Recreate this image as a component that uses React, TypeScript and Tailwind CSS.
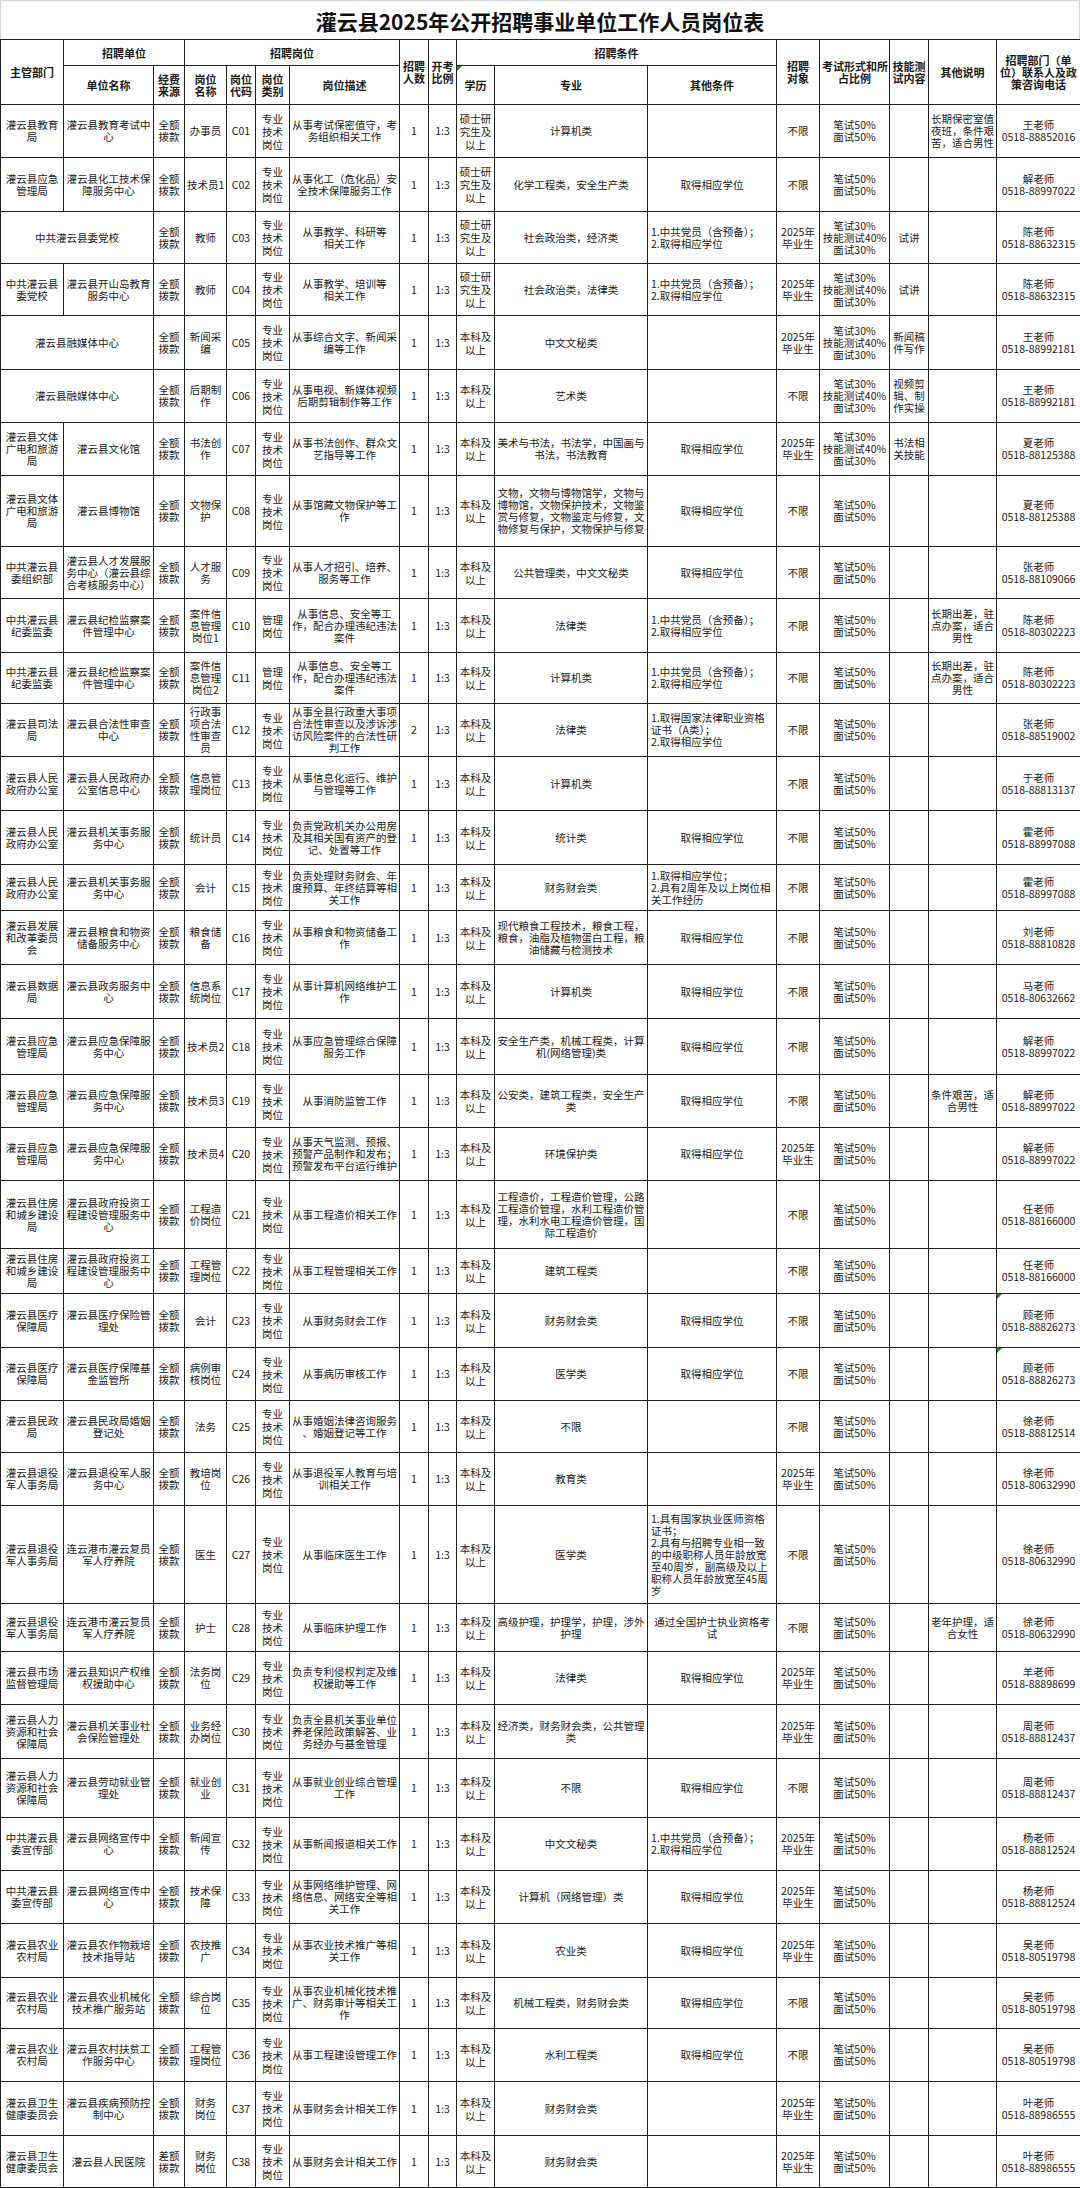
import React from "react";

type R = {
  h: string;
  dept: string;
  unit: string;
  merged?: boolean;
  fund: string;
  name: string;
  code: string;
  cat: string;
  desc: string;
  num: string;
  edu: string;
  major: string;
  other: string;
  otherLeft?: boolean;
  target: string;
  exam: string;
  skill: string;
  note: string;
  contact: string;
  mark?: boolean;
};

const E2 = "2025年\n毕业生";
const X55 = "笔试50%\n面试50%";
const X343 = "笔试30%\n技能测试40%\n面试30%";
const ZY = "专业\n技术\n岗位";
const GL = "管理\n岗位";
const BK = "本科及\n以上";
const SS = "硕士研\n究生及\n以上";
const DEG = "取得相应学位";
const DY = "1.中共党员（含预备）；\n2.取得相应学位";
const QE = "全额\n拨款";

function mk(p: Partial<R> & { h: string; dept: string; unit: string; name: string; code: string; desc: string; contact: string }): R {
  return {
    fund: QE,
    cat: ZY,
    num: "1",
    edu: BK,
    major: "",
    other: "",
    target: "不限",
    exam: X55,
    skill: "",
    note: "",
    ...p,
  } as R;
}

const rows: R[] = [
  mk({ h: "h-[53px]", dept: "灌云县教育\n局", unit: "灌云县教育考试中\n心", name: "办事员", code: "C01", desc: "从事考试保密值守，考\n务组织相关工作", edu: SS, major: "计算机类", note: "长期保密室值\n夜班，条件艰\n苦，适合男性", contact: "王老师\n0518-88852016" }),
  mk({ h: "h-[54px]", dept: "灌云县应急\n管理局", unit: "灌云县化工技术保\n障服务中心", name: "技术员1", code: "C02", desc: "从事化工（危化品）安\n全技术保障服务工作", edu: SS, major: "化学工程类，安全生产类", other: DEG, contact: "解老师\n0518-88997022" }),
  mk({ h: "h-[52px]", dept: "", unit: "中共灌云县委党校", merged: true, name: "教师", code: "C03", desc: "从事教学、科研等\n相关工作", edu: SS, major: "社会政治类，经济类", other: DY, otherLeft: true, target: E2, exam: X343, skill: "试讲", contact: "陈老师\n0518-88632315" }),
  mk({ h: "h-[52px]", dept: "中共灌云县\n委党校", unit: "灌云县开山岛教育\n服务中心", name: "教师", code: "C04", desc: "从事教学、培训等\n相关工作", edu: SS, major: "社会政治类，法律类", other: DY, otherLeft: true, target: E2, exam: X343, skill: "试讲", contact: "陈老师\n0518-88632315" }),
  mk({ h: "h-[54px]", dept: "", unit: "灌云县融媒体中心", merged: true, name: "新闻采\n编", code: "C05", desc: "从事综合文字、新闻采\n编等工作", major: "中文文秘类", target: E2, exam: X343, skill: "新闻稿\n件写作", contact: "王老师\n0518-88992181" }),
  mk({ h: "h-[53px]", dept: "", unit: "灌云县融媒体中心", merged: true, name: "后期制\n作", code: "C06", desc: "从事电视、新媒体视频\n后期剪辑制作等工作", major: "艺术类", exam: X343, skill: "视频剪\n辑、制\n作实操", contact: "王老师\n0518-88992181" }),
  mk({ h: "h-[53px]", dept: "灌云县文体\n广电和旅游\n局", unit: "灌云县文化馆", name: "书法创\n作", code: "C07", desc: "从事书法创作、群众文\n艺指导等工作", major: "美术与书法，书法学，中国画与\n书法，书法教育", other: DEG, target: E2, exam: X343, skill: "书法相\n关技能", contact: "夏老师\n0518-88125388" }),
  mk({ h: "h-[71px]", dept: "灌云县文体\n广电和旅游\n局", unit: "灌云县博物馆", name: "文物保\n护", code: "C08", desc: "从事馆藏文物保护等工\n作", major: "文物，文物与博物馆学，文物与\n博物馆，文物保护技术，文物鉴\n赏与修复，文物鉴定与修复，文\n物修复与保护，文物保护与修复", other: DEG, contact: "夏老师\n0518-88125388" }),
  mk({ h: "h-[52px]", dept: "中共灌云县\n委组织部", unit: "灌云县人才发展服\n务中心（灌云县综\n合考核服务中心）", name: "人才服\n务", code: "C09", desc: "从事人才招引、培养、\n服务等工作", major: "公共管理类，中文文秘类", other: DEG, contact: "张老师\n0518-88109066" }),
  mk({ h: "h-[54px]", dept: "中共灌云县\n纪委监委", unit: "灌云县纪检监察案\n件管理中心", name: "案件信\n息管理\n岗位1", code: "C10", cat: GL, desc: "从事信息、安全等工\n作，配合办理违纪违法\n案件", major: "法律类", other: DY, otherLeft: true, note: "长期出差，驻\n点办案，适合\n男性", contact: "陈老师\n0518-80302223" }),
  mk({ h: "h-[51px]", dept: "中共灌云县\n纪委监委", unit: "灌云县纪检监察案\n件管理中心", name: "案件信\n息管理\n岗位2", code: "C11", cat: GL, desc: "从事信息、安全等工\n作，配合办理违纪违法\n案件", major: "计算机类", other: DY, otherLeft: true, note: "长期出差，驻\n点办案，适合\n男性", contact: "陈老师\n0518-80302223" }),
  mk({ h: "h-[53px]", dept: "灌云县司法\n局", unit: "灌云县合法性审查\n中心", name: "行政事\n项合法\n性审查\n员", code: "C12", desc: "从事全县行政重大事项\n合法性审查以及涉诉涉\n访风险案件的合法性研\n判工作", num: "2", major: "法律类", other: "1.取得国家法律职业资格\n证书（A类）；\n2.取得相应学位", otherLeft: true, contact: "张老师\n0518-88519002" }),
  mk({ h: "h-[54px]", dept: "灌云县人民\n政府办公室", unit: "灌云县人民政府办\n公室信息中心", name: "信息管\n理岗位", code: "C13", desc: "从事信息化运行、维护\n与管理等工作", major: "计算机类", contact: "于老师\n0518-88813137" }),
  mk({ h: "h-[54px]", dept: "灌云县人民\n政府办公室", unit: "灌云县机关事务服\n务中心", name: "统计员", code: "C14", desc: "负责党政机关办公用房\n及其相关国有资产的登\n记、处置等工作", major: "统计类", other: DEG, contact: "霍老师\n0518-88997088" }),
  mk({ h: "h-[46px]", dept: "灌云县人民\n政府办公室", unit: "灌云县机关事务服\n务中心", name: "会计", code: "C15", desc: "负责处理财务财会、年\n度预算、年终结算等相\n关工作", major: "财务财会类", other: "1.取得相应学位；\n2.具有2周年及以上岗位相\n关工作经历", otherLeft: true, contact: "霍老师\n0518-88997088" }),
  mk({ h: "h-[54px]", dept: "灌云县发展\n和改革委员\n会", unit: "灌云县粮食和物资\n储备服务中心", name: "粮食储\n备", code: "C16", desc: "从事粮食和物资储备工\n作", major: "现代粮食工程技术，粮食工程，\n粮食，油脂及植物蛋白工程，粮\n油储藏与检测技术", other: DEG, contact: "刘老师\n0518-88810828" }),
  mk({ h: "h-[54px]", dept: "灌云县数据\n局", unit: "灌云县政务服务中\n心", name: "信息系\n统岗位", code: "C17", desc: "从事计算机网络维护工\n作", major: "计算机类", other: DEG, contact: "马老师\n0518-80632662" }),
  mk({ h: "h-[56px]", dept: "灌云县应急\n管理局", unit: "灌云县应急保障服\n务中心", name: "技术员2", code: "C18", desc: "从事应急管理综合保障\n服务工作", major: "安全生产类，机械工程类，计算\n机(网络管理)类", other: DEG, contact: "解老师\n0518-88997022" }),
  mk({ h: "h-[53px]", dept: "灌云县应急\n管理局", unit: "灌云县应急保障服\n务中心", name: "技术员3", code: "C19", desc: "从事消防监管工作", major: "公安类，建筑工程类，安全生产\n类", other: DEG, note: "条件艰苦，适\n合男性", contact: "解老师\n0518-88997022" }),
  mk({ h: "h-[53px]", dept: "灌云县应急\n管理局", unit: "灌云县应急保障服\n务中心", name: "技术员4", code: "C20", desc: "从事天气监测、预报、\n预警产品制作和发布；\n预警发布平台运行维护", major: "环境保护类", other: DEG, target: E2, contact: "解老师\n0518-88997022" }),
  mk({ h: "h-[68px]", dept: "灌云县住房\n和城乡建设\n局", unit: "灌云县政府投资工\n程建设管理服务中\n心", name: "工程造\n价岗位", code: "C21", desc: "从事工程造价相关工作", major: "工程造价，工程造价管理，公路\n工程造价管理，水利工程造价管\n理，水利水电工程造价管理，国\n际工程造价", contact: "任老师\n0518-88166000" }),
  mk({ h: "h-[45px]", dept: "灌云县住房\n和城乡建设\n局", unit: "灌云县政府投资工\n程建设管理服务中\n心", name: "工程管\n理岗位", code: "C22", desc: "从事工程管理相关工作", major: "建筑工程类", contact: "任老师\n0518-88166000" }),
  mk({ h: "h-[54px]", dept: "灌云县医疗\n保障局", unit: "灌云县医疗保险管\n理处", name: "会计", code: "C23", desc: "从事财务财会工作", major: "财务财会类", other: DEG, contact: "顾老师\n0518-88826273", mark: true }),
  mk({ h: "h-[53px]", dept: "灌云县医疗\n保障局", unit: "灌云县医疗保障基\n金监管所", name: "病例审\n核岗位", code: "C24", desc: "从事病历审核工作", major: "医学类", other: DEG, contact: "顾老师\n0518-88826273", mark: true }),
  mk({ h: "h-[52px]", dept: "灌云县民政\n局", unit: "灌云县民政局婚姻\n登记处", name: "法务", code: "C25", desc: "从事婚姻法律咨询服务\n、婚姻登记等工作", major: "不限", contact: "徐老师\n0518-88812514" }),
  mk({ h: "h-[53px]", dept: "灌云县退役\n军人事务局", unit: "灌云县退役军人服\n务中心", name: "教培岗\n位", code: "C26", desc: "从事退役军人教育与培\n训相关工作", major: "教育类", target: E2, contact: "徐老师\n0518-80632990" }),
  mk({ h: "h-[98px]", dept: "灌云县退役\n军人事务局", unit: "连云港市灌云复员\n军人疗养院", name: "医生", code: "C27", desc: "从事临床医生工作", major: "医学类", other: "1.具有国家执业医师资格\n证书；\n2.具有与招聘专业相一致\n的中级职称人员年龄放宽\n至40周岁，副高级及以上\n职称人员年龄放宽至45周\n岁", otherLeft: true, contact: "徐老师\n0518-80632990" }),
  mk({ h: "h-[48px]", dept: "灌云县退役\n军人事务局", unit: "连云港市灌云复员\n军人疗养院", name: "护士", code: "C28", desc: "从事临床护理工作", major: "高级护理，护理学，护理，涉外\n护理", other: "通过全国护士执业资格考\n试", note: "老年护理，适\n合女性", contact: "徐老师\n0518-80632990" }),
  mk({ h: "h-[53px]", dept: "灌云县市场\n监督管理局", unit: "灌云县知识产权维\n权援助中心", name: "法务岗\n位", code: "C29", desc: "负责专利侵权判定及维\n权援助等工作", major: "法律类", other: DEG, target: E2, contact: "羊老师\n0518-88898699" }),
  mk({ h: "h-[54px]", dept: "灌云县人力\n资源和社会\n保障局", unit: "灌云县机关事业社\n会保险管理处", name: "业务经\n办岗位", code: "C30", desc: "负责全县机关事业单位\n养老保险政策解答、业\n务经办与基金管理", major: "经济类，财务财会类，公共管理\n类", target: E2, contact: "周老师\n0518-88812437" }),
  mk({ h: "h-[59px]", dept: "灌云县人力\n资源和社会\n保障局", unit: "灌云县劳动就业管\n理处", name: "就业创\n业", code: "C31", desc: "从事就业创业综合管理\n工作", major: "不限", other: DEG, contact: "周老师\n0518-88812437" }),
  mk({ h: "h-[53px]", dept: "中共灌云县\n委宣传部", unit: "灌云县网络宣传中\n心", name: "新闻宣\n传", code: "C32", desc: "从事新闻报道相关工作", major: "中文文秘类", other: DY, otherLeft: true, target: E2, contact: "杨老师\n0518-88812524" }),
  mk({ h: "h-[53px]", dept: "中共灌云县\n委宣传部", unit: "灌云县网络宣传中\n心", name: "技术保\n障", code: "C33", desc: "从事网络维护管理、网\n络信息、网络安全等相\n关工作", major: "计算机（网络管理）类", other: DEG, target: E2, contact: "杨老师\n0518-88812524" }),
  mk({ h: "h-[54px]", dept: "灌云县农业\n农村局", unit: "灌云县农作物栽培\n技术指导站", name: "农技推\n广", code: "C34", desc: "从事农业技术推广等相\n关工作", major: "农业类", other: DEG, target: E2, contact: "吴老师\n0518-80519798" }),
  mk({ h: "h-[51px]", dept: "灌云县农业\n农村局", unit: "灌云县农业机械化\n技术推广服务站", name: "综合岗\n位", code: "C35", desc: "从事农业机械化技术推\n广、财务审计等相关工\n作", major: "机械工程类，财务财会类", other: DEG, contact: "吴老师\n0518-80519798" }),
  mk({ h: "h-[53px]", dept: "灌云县农业\n农村局", unit: "灌云县农村扶贫工\n作服务中心", name: "工程管\n理岗位", code: "C36", desc: "从事工程建设管理工作", major: "水利工程类", other: DEG, contact: "吴老师\n0518-80519798" }),
  mk({ h: "h-[54px]", dept: "灌云县卫生\n健康委员会", unit: "灌云县疾病预防控\n制中心", name: "财务\n岗位", code: "C37", desc: "从事财务会计相关工作", major: "财务财会类", target: E2, contact: "叶老师\n0518-88986555" }),
  mk({ h: "h-[52px]", dept: "灌云县卫生\n健康委员会", unit: "灌云县人民医院", fund: "差额\n拨款", name: "财务\n岗位", code: "C38", desc: "从事财务会计相关工作", major: "财务财会类", target: E2, contact: "叶老师\n0518-88986555" }),
];

const td = "border border-[#1f1f1f] px-[2px] py-0 align-middle text-center whitespace-pre leading-[12px]";
const tdT = "border border-[#1f1f1f] px-[2px] py-0 align-middle text-center whitespace-pre leading-[13px]";
const tdL = "border border-[#1f1f1f] px-[3px] py-0 align-middle text-left whitespace-pre leading-[12px]";
const th = "border border-[#1f1f1f] px-[2px] py-0 align-middle text-center whitespace-pre leading-[12px] font-bold text-[11px]";

function Mark() {
  return <span className="absolute left-0 top-0 h-0 w-0 border-t-[5px] border-r-[5px] border-t-[#1a8a1a] border-r-transparent" />;
}

export default function App() {
  return (
    <div className="w-[1080px] h-[2188px] bg-white text-[#1a1a1a] font-['Noto_Sans_CJK_SC','Noto_Sans',sans-serif] text-[10.5px]">
      <div className="h-[39px] border-t border-l border-r border-[#d4d4d4] flex items-center justify-center text-[21px] font-semibold text-[#111] pt-[3px]">
        灌云县2025年公开招聘事业单位工作人员岗位表
      </div>
      <table className="table-fixed border-collapse w-[1080px]">
        <colgroup>
          <col className="w-[63px]" />
          <col className="w-[90px]" />
          <col className="w-[31px]" />
          <col className="w-[42px]" />
          <col className="w-[29px]" />
          <col className="w-[34px]" />
          <col className="w-[110px]" />
          <col className="w-[29px]" />
          <col className="w-[28px]" />
          <col className="w-[38px]" />
          <col className="w-[153px]" />
          <col className="w-[129px]" />
          <col className="w-[43px]" />
          <col className="w-[70px]" />
          <col className="w-[39px]" />
          <col className="w-[68px]" />
          <col className="w-[84px]" />
        </colgroup>
        <thead>
          <tr className="h-[26px]">
            <th rowSpan={2} className={th}>主管部门</th>
            <th colSpan={2} className={th}>招聘单位</th>
            <th colSpan={4} className={th}>招聘岗位</th>
            <th rowSpan={2} className={th}>{"招聘\n人数"}</th>
            <th rowSpan={2} className={th}>{"开考\n比例"}</th>
            <th colSpan={3} className={th}>招聘条件</th>
            <th rowSpan={2} className={th}>{"招聘\n对象"}</th>
            <th rowSpan={2} className={th}>{"考试形式和所\n占比例"}</th>
            <th rowSpan={2} className={th}>{"技能测\n试内容"}</th>
            <th rowSpan={2} className={th}>其他说明</th>
            <th rowSpan={2} className={th}>{"招聘部门（单\n位）联系人及政\n策咨询电话"}</th>
          </tr>
          <tr className="h-[39px]">
            <th className={th}>单位名称</th>
            <th className={th}>{"经费\n来源"}</th>
            <th className={th}>{"岗位\n名称"}</th>
            <th className={th}>{"岗位\n代码"}</th>
            <th className={th}>{"岗位\n类别"}</th>
            <th className={th}>岗位描述</th>
            <th className={`${th} relative`}>
              <Mark />
              学历
            </th>
            <th className={th}>专业</th>
            <th className={th}>其他条件</th>
          </tr>
        </thead>
        <tbody>
          {rows.map((r) => (
            <tr key={r.code} className={r.h}>
              {r.merged ? (
                <td colSpan={2} className={td}>{r.unit}</td>
              ) : (
                <>
                  <td className={td}>{r.dept}</td>
                  <td className={td}>{r.unit}</td>
                </>
              )}
              <td className={td}>{r.fund}</td>
              <td className={td}>{r.name}</td>
              <td className={td}>{r.code}</td>
              <td className={tdT}>{r.cat}</td>
              <td className={td}>{r.desc}</td>
              <td className={td}>{r.num}</td>
              <td className={td}>1:3</td>
              <td className={tdT}>{r.edu}</td>
              <td className={td}>{r.major}</td>
              <td className={r.otherLeft ? tdL : td}>{r.other}</td>
              <td className={td}>{r.target}</td>
              <td className={td}>{r.exam}</td>
              <td className={td}>{r.skill}</td>
              <td className={td}>{r.note}</td>
              <td className={`${td} relative`}>
                {r.mark ? <Mark /> : null}
                {r.contact}
              </td>
            </tr>
          ))}
        </tbody>
      </table>
    </div>
  );
}
